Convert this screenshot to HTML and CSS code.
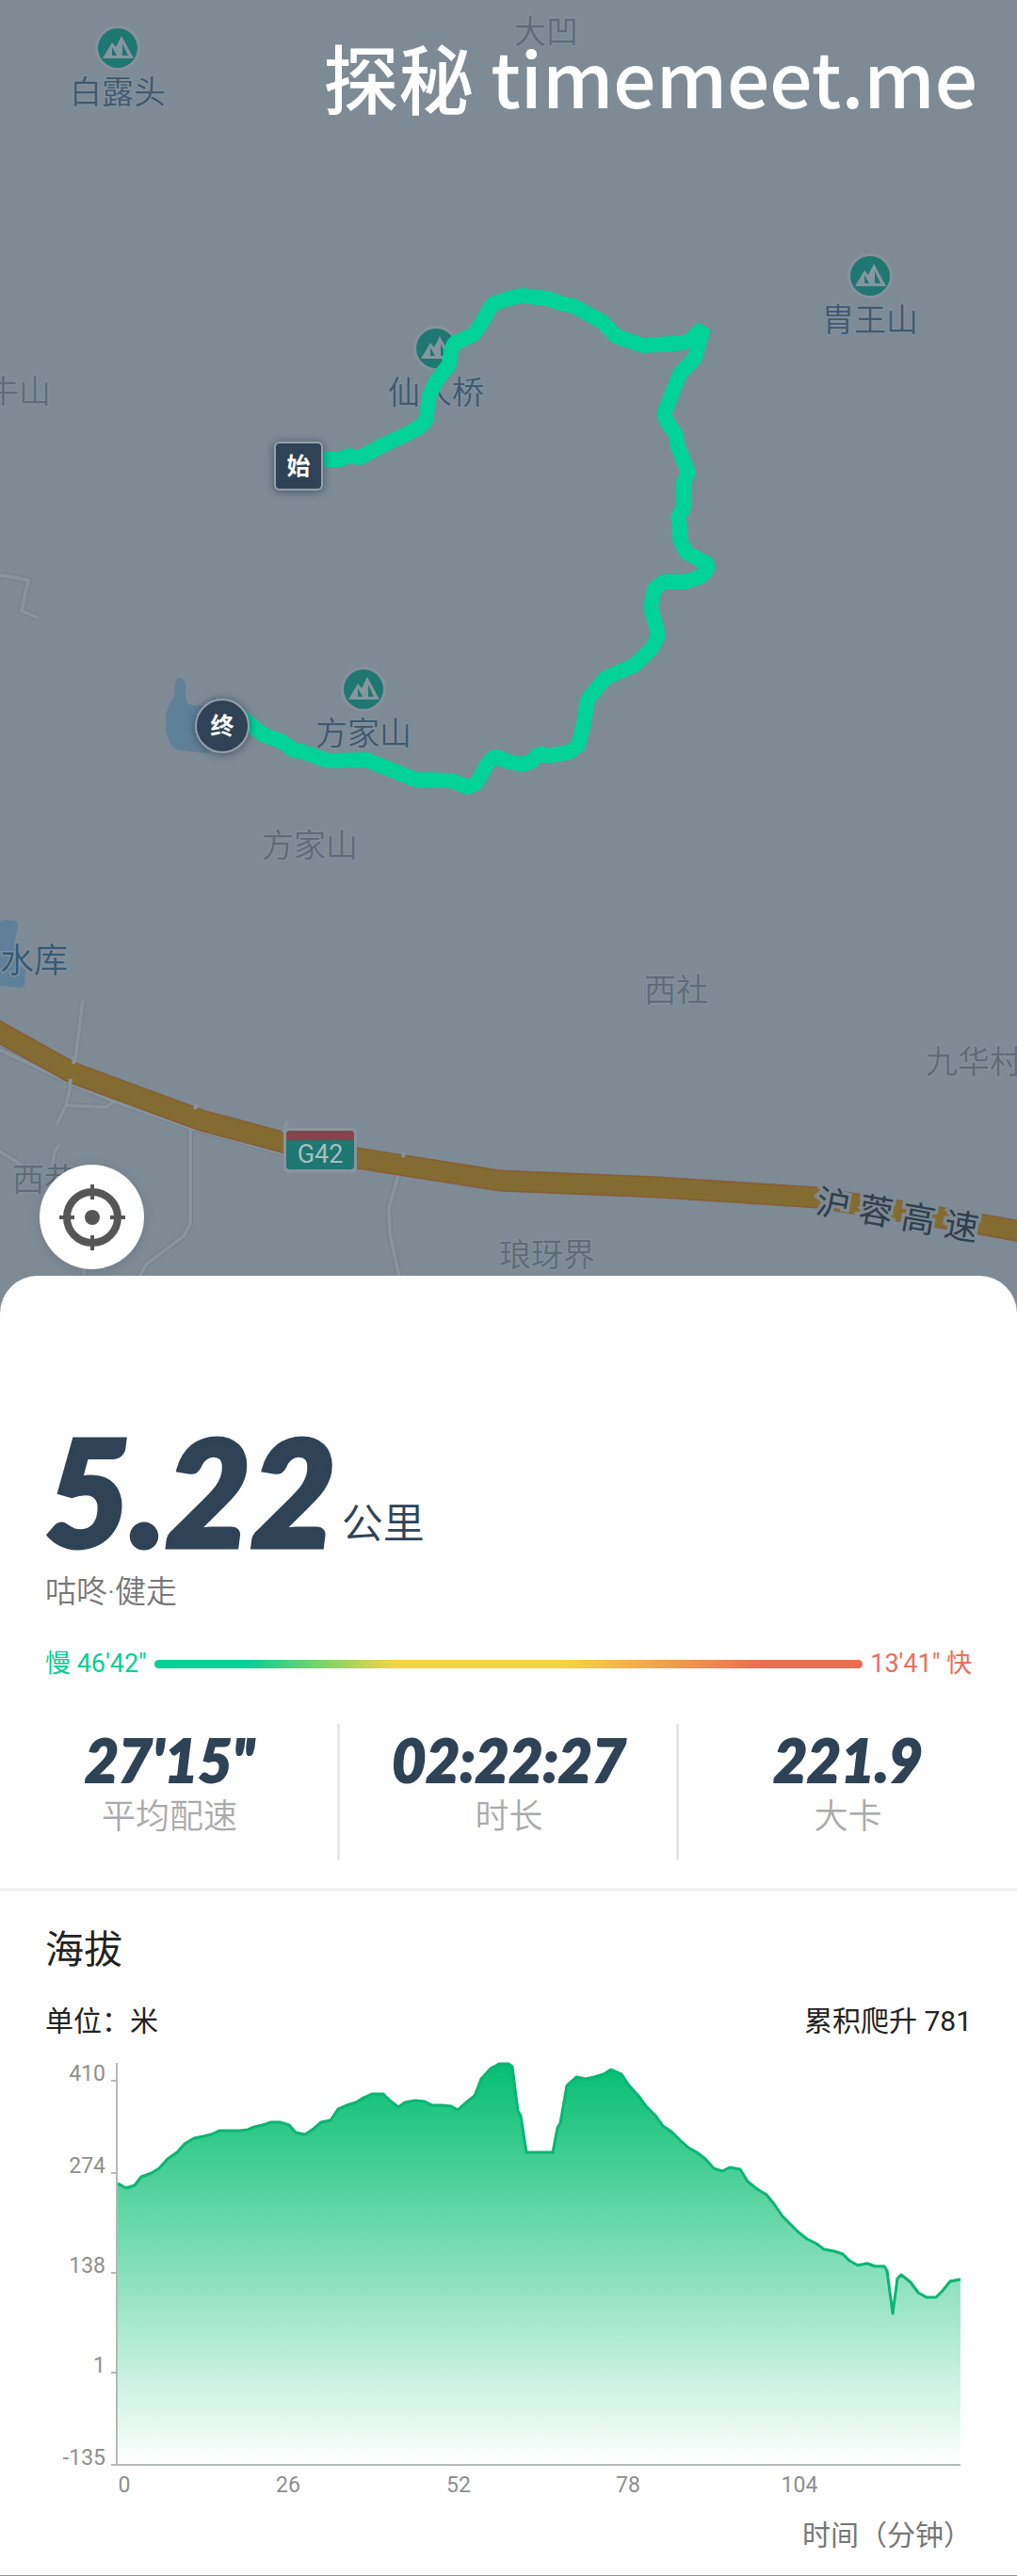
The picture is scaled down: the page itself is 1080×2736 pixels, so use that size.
FILE: index.html
```html
<!DOCTYPE html>
<html lang="zh-CN">
<head>
<meta charset="utf-8">
<meta name="viewport" content="width=device-width, initial-scale=1">
<title>咕咚·健走</title>
<link rel="stylesheet" href="styles.css">
</head>
<body>
<main class="page">
  <section class="map" aria-label="路线地图">
    <svg class="map-canvas" viewBox="0 0 1080 1395" preserveAspectRatio="xMidYMax slice">
      <defs>
        <g id="peak">
          <circle r="24" fill="#87929c"/>
          <circle r="21" fill="#1f7771"/>
          <path fill="#87959e" fill-rule="evenodd" d="M-16 11 L-6 -6 L-2 -1 L4 -13 L17 11 Z M-6 -1 L-6 8 L-1 8 Z M5 -5 L5 8 L11 8 Z"/>
        </g>
      </defs>

      <path class="lake" d="M186 726Q187 720 191 720Q197 722 197 729L197 741Q198 748 204 749L220 749L228 740L236 760L222 800L190 797Q182 795 180 787L176 776L176 762Q178 748 185 740Z"/>
      <path class="lake" d="M0 979Q2 977 5 977L16 978Q19 979 19 984L15 1003L16 1022L27 1030L26 1046Q24 1049 20 1049L0 1047Z"/>

      <g class="lane-edge">
        <path d="M-5 610L30 616L23 649L40 656"/>
        <path d="M-5 1113L74 1150L117 1168L203 1198L300 1225"/>
        <path d="M88 1062L78 1140L70 1174L60 1195"/>
        <path d="M70 1174L113 1176L122 1169"/>
        <path d="M63 1216L58 1223L55 1240"/>
        <path d="M-5 1220L26 1239"/>
        <path d="M202 1199V1300L195 1313L155 1343L140 1372"/>
        <path d="M423 1248L413 1283L414 1310L426 1366"/>
        <path d="M91 1340L87 1366"/>
      </g>
      <g class="lane">
        <path d="M-5 610L30 616L23 649L40 656"/>
        <path d="M-5 1113L74 1150L117 1168L203 1198L300 1225"/>
        <path d="M88 1062L78 1140L70 1174L60 1195"/>
        <path d="M70 1174L113 1176L122 1169"/>
        <path d="M63 1216L58 1223L55 1240"/>
        <path d="M-5 1220L26 1239"/>
        <path d="M202 1199V1300L195 1313L155 1343L140 1372"/>
        <path d="M423 1248L413 1283L414 1310L426 1366"/>
        <path d="M91 1340L87 1366"/>
      </g>

      <path class="highway-edge" d="M-10 1091L76 1139L214 1190L300 1213L379 1230L531 1254L700 1261L868 1272L905 1278L1040 1300L1090 1309"/>
      <path class="highway" d="M-10 1091L76 1139L214 1190L300 1213L379 1230L531 1254L700 1261L868 1272L905 1278L1040 1300L1090 1309"/>
      <path class="lane" d="M79 1122L78 1130M75 1146L74 1152M209 1172L207 1178M305 1191L301 1203M429 1224L428 1229"/>

      <g class="shield">
        <rect x="301" y="1198" width="78" height="48" rx="5" fill="#87949d"/>
        <rect x="304" y="1201" width="72" height="41" rx="4" fill="#1f7771"/>
        <path d="M304 1211V1205Q304 1201 308 1201H372Q376 1201 376 1205V1211Z" fill="#87424b"/>
        <text x="340" y="1235">G42</text>
      </g>

      <g class="place">
        <text x="580" y="46">大凹</text>
        <text x="20" y="428">牛山</text>
        <text x="329" y="910">方家山</text>
        <text x="718" y="1064">西社</text>
        <text x="1034" y="1140">九华村</text>
        <text x="581" y="1345">琅玡界</text>
        <text x="47" y="1265">西巷</text>
      </g>
      <text class="water-name" x="0" y="1033">水库</text>
      <text class="road-name" transform="translate(865 1288) rotate(10)" x="0 46 92 138">沪蓉高速</text>

      <g class="summit">
        <use href="#peak" x="125" y="51"/><text x="125" y="110">白露头</text>
        <use href="#peak" x="463" y="370"/><text x="463" y="429">仙人桥</text>
        <use href="#peak" x="924" y="293"/><text x="924" y="352">胄王山</text>
        <use href="#peak" x="386" y="732"/><text x="386" y="791">方家山</text>
      </g>

      <path class="route" d="M318 488L361 488L370 484L382 486L406 473L432 461L446 453L452 447L456 420L463 405L477 387L479 373L482 365L503 355L510 345L523 323L540 317L554 314L581 317L595 322L609 325L640 342L654 357L683 367L726 364L733 361L747 348L738 380L722 397L712 422L705 440L709 449L718 462L719 472L731 502L726 512L726 540L720 548L722 560L722 573L729 587L752 599L751 605L743 613L728 618L705 618L695 625L691 645L698 670L698 678L691 690L673 707L643 720L624 743L620 768L614 792L604 799L581 803L573 800L564 809L554 812L540 809L525 803L517 812L506 832L496 836L479 829L441 828L389 807L348 808L320 798L312 797L300 788L279 780L258 763L236 771"/>

      <g class="marker">
        <rect x="292" y="470" width="50" height="50" rx="5"/>
        <text x="317" y="504">始</text>
        <circle cx="236" cy="771" r="28"/>
        <text x="236" y="780">终</text>
      </g>
    </svg>
    <p class="watermark">探秘 timemeet.me</p>
    <button class="locate" type="button" aria-label="定位">
      <svg viewBox="-36 -36 72 72" width="72" height="72" fill="none" stroke="#565656">
        <circle r="27" stroke-width="8"/>
        <path d="M-35 0H-19M35 0H19M0 -35V-19M0 35V19" stroke-width="4"/>
        <circle r="8" fill="#565656" stroke="none"/>
      </svg>
    </button>
  </section>

  <section class="sheet">
    <div class="summary">
      <p class="distance"><strong class="distance-value">5.22</strong><span class="distance-unit">公里</span></p>
      <p class="brand">咕咚·健走</p>
      <div class="pace">
        <span class="pace-slow">慢 46'42"</span>
        <span class="pace-bar"></span>
        <span class="pace-fast">13'41" 快</span>
      </div>
    </div>

    <dl class="stats">
      <div class="stat"><dd>27'15"</dd><dt>平均配速</dt></div>
      <div class="stat"><dd>02:22:27</dd><dt>时长</dt></div>
      <div class="stat"><dd>221.9</dd><dt>大卡</dt></div>
    </dl>

    <section class="altitude">
      <h2>海拔</h2>
      <div class="altitude-info"><span>单位：米</span><span>累积爬升 781</span></div>
      <svg class="chart" viewBox="0 2180 1080 480" role="img" aria-label="海拔曲线">
        <defs>
          <linearGradient id="rise" gradientUnits="userSpaceOnUse" x1="0" y1="2191" x2="0" y2="2618">
            <stop offset="0" stop-color="#05be72"/>
            <stop offset="1" stop-color="#ffffff"/>
          </linearGradient>
        </defs>
        <path fill="url(#rise)" d="M125 2319L134 2324L143 2321L150 2312L161 2308L169 2303L178 2293L188 2286L196 2277L206 2271L216 2269L224 2267L233 2263L254 2263L263 2262L270 2259L279 2257L288 2254L297 2254L307 2257L314 2265L324 2267L333 2261L341 2254L351 2252L359 2240L368 2236L378 2233L386 2228L395 2224L407 2224L414 2231L423 2238L430 2233L441 2231L451 2232L459 2236L469 2236L479 2237L486 2241L495 2233L504 2226L511 2208L521 2197L530 2192L540 2192L544 2195L550 2242L553 2247L559 2286L587 2286L592 2260L595 2255L602 2215L612 2206L622 2208L631 2206L641 2203L649 2198L660 2203L668 2215L678 2226L686 2237L696 2247L704 2258L713 2264L722 2273L731 2281L740 2286L749 2293L758 2303L767 2306L775 2302L786 2304L794 2317L804 2325L814 2331L822 2341L831 2354L840 2363L848 2371L857 2378L867 2383L875 2389L886 2391L895 2394L902 2401L911 2406L921 2404L929 2407L939 2407L942 2412L948 2457L953 2420L957 2416L967 2424L975 2435L984 2440L994 2440L1001 2433L1009 2423L1020 2421V2617H125Z"/>
        <path class="curve" d="M125 2319L134 2324L143 2321L150 2312L161 2308L169 2303L178 2293L188 2286L196 2277L206 2271L216 2269L224 2267L233 2263L254 2263L263 2262L270 2259L279 2257L288 2254L297 2254L307 2257L314 2265L324 2267L333 2261L341 2254L351 2252L359 2240L368 2236L378 2233L386 2228L395 2224L407 2224L414 2231L423 2238L430 2233L441 2231L451 2232L459 2236L469 2236L479 2237L486 2241L495 2233L504 2226L511 2208L521 2197L530 2192L540 2192L544 2195L550 2242L553 2247L559 2286L587 2286L592 2260L595 2255L602 2215L612 2206L622 2208L631 2206L641 2203L649 2198L660 2203L668 2215L678 2226L686 2237L696 2247L704 2258L713 2264L722 2273L731 2281L740 2286L749 2293L758 2303L767 2306L775 2302L786 2304L794 2317L804 2325L814 2331L822 2341L831 2354L840 2363L848 2371L857 2378L867 2383L875 2389L886 2391L895 2394L902 2401L911 2406L921 2404L929 2407L939 2407L942 2412L948 2457L953 2420L957 2416L967 2424L975 2435L984 2440L994 2440L1001 2433L1009 2423L1020 2421"/>
        <g class="axis">
          <path d="M124 2191V2618M118 2210H124M118 2308H124M118 2414H124M118 2520H124M118 2618H1020"/>
        </g>
        <g class="tick-y">
          <text x="112" y="2210">410</text>
          <text x="112" y="2308">274</text>
          <text x="112" y="2414">138</text>
          <text x="112" y="2520">1</text>
          <text x="112" y="2618">-135</text>
        </g>
        <g class="tick-x">
          <text x="132" y="2647">0</text>
          <text x="306" y="2647">26</text>
          <text x="487" y="2647">52</text>
          <text x="667" y="2647">78</text>
          <text x="849" y="2647">104</text>
        </g>
      </svg>
      <p class="axis-title">时间（分钟）</p>
    </section>
  </section>
</main>
</body>
</html>
```
FILE: styles.css
```css
* {
  box-sizing: border-box;
  margin: 0;
  padding: 0;
}

body {
  background: #7e8a94;
  color: #222;
  font-family: Roboto, "Noto Sans CJK SC", sans-serif;
}

.page {
  display: flex;
  flex-direction: column;
}

/* Map */
.map {
  position: relative;
  overflow: hidden;
}

.map-canvas {
  display: block;
  width: 100%;
  height: auto;
}

.map text {
  font-family: "Noto Sans CJK SC", sans-serif;
  font-weight: 350;
  text-anchor: middle;
  paint-order: stroke;
  stroke: #83909a;
  stroke-width: 3px;
}

.lake { fill: #5f8099; }

.lane, .lane-edge, .highway, .highway-edge, .route {
  fill: none;
}

.lane { stroke: #87939d; stroke-width: 4px; stroke-linejoin: round; }
.lane-edge { stroke: #74818b; stroke-width: 6px; stroke-linejoin: round; }
.highway { stroke: #846b31; stroke-width: 20px; }
.highway-edge { stroke: #865d37; stroke-width: 23px; }
.route { stroke: #00d298; stroke-width: 16px; stroke-linejoin: bevel; }

.place { fill: #5f6c77; font-size: 34px; }
.summit { font-size: 34px; }
.summit text { fill: #3f5a70; }

.map .water-name {
  fill: #355a78;
  font-size: 36px;
  text-anchor: start;
}

.map .road-name {
  fill: #2f3f4c;
  stroke: #7e8a94;
  stroke-width: 7px;
  font-size: 36px;
  font-weight: 400;
  text-anchor: start;
}

.map .shield text {
  fill: #a3bfc2;
  stroke: none;
  font-family: Roboto, sans-serif;
  font-size: 27px;
  font-weight: 400;
}

.marker rect, .marker circle {
  fill: #2f4256;
  stroke: #96a1ab;
  stroke-width: 2px;
  filter: drop-shadow(0 1px 5px rgba(30, 48, 70, 0.6));
}

.map .marker text {
  fill: #fff;
  stroke: none;
  font-size: 25px;
  font-weight: 700;
}

.watermark {
  position: absolute;
  top: 20px;
  right: 42px;
  color: #fff;
  font: 500 80px/120px "Noto Sans CJK SC", sans-serif;
  white-space: nowrap;
}

.locate {
  position: absolute;
  left: 42px;
  bottom: 47px;
  display: grid;
  place-items: center;
  width: 111px;
  height: 111px;
  border: 0;
  border-radius: 50%;
  background: #fff;
  box-shadow: 0 2px 12px rgba(40, 50, 60, 0.15);
}

/* Sheet */
.sheet {
  position: relative;
  margin-top: -40px;
  padding-top: 150px;
  border-bottom: 1px solid #8f8f8f;
  border-radius: 40px 40px 0 0;
  background: #fff;
}

.summary {
  padding: 0 48px;
}

.distance {
  display: flex;
  align-items: flex-end;
  gap: 6px;
  color: #2f4256;
}

.distance-value {
  font: italic 900 156px/156px Lato, sans-serif;
  -webkit-text-stroke: 5px #2f4256;
}

.distance-unit {
  padding-bottom: 10px;
  font-size: 44px;
  font-weight: 350;
  line-height: 64px;
}

.brand {
  margin-top: 10px;
  color: #777;
  font-size: 33px;
  font-weight: 350;
  line-height: 40px;
}

.pace {
  display: flex;
  align-items: center;
  gap: 8px;
  margin-top: 38px;
  font-size: 27px;
  line-height: 36px;
}

.pace-slow { color: #00cf96; }
.pace-fast { color: #e8705a; }

.pace-bar {
  flex: 1;
  height: 9px;
  border-radius: 5px;
  background: linear-gradient(90deg, #03d196 13%, #f3d53f 34%, #f3d53f 58%, #ed6c55 86%);
}

.stats {
  display: grid;
  grid-template-columns: repeat(3, 1fr);
  margin: 46px 0 30px;
}

.stat {
  padding: 7px 0 21px;
  text-align: center;
}

.stat + .stat {
  margin-left: -2px;
  border-left: 3px solid #e6e6e6;
}

.stat dd {
  color: #2f4256;
  font: italic 900 62px/62px Lato, sans-serif;
  -webkit-text-stroke: 2px #2f4256;
}

.stat dt {
  margin-top: 6px;
  color: #aaa;
  font-size: 36px;
  font-weight: 350;
  line-height: 48px;
}

/* Altitude */
.altitude {
  padding: 34px 0 22px;
  border-top: 4px solid #f2f2f2;
}

.altitude h2 {
  padding: 0 48px;
  font-size: 41px;
  font-weight: 400;
  line-height: 56px;
}

.altitude-info {
  display: flex;
  justify-content: space-between;
  margin-top: 28px;
  padding: 0 48px;
  font-size: 30px;
  line-height: 40px;
}

.chart {
  display: block;
  width: 100%;
  height: auto;
  margin: 13px 0;
}

.curve { fill: none; stroke: #0ab573; stroke-width: 3px; stroke-linejoin: round; }
.axis { fill: none; stroke: #b4b8b6; stroke-width: 2px; }
.chart text { fill: #8e8e8e; font-size: 23px; }
.tick-y { text-anchor: end; }
.tick-x { text-anchor: middle; }

.axis-title {
  padding: 0 48px;
  color: #777;
  font-size: 30px;
  line-height: 40px;
  text-align: right;
}
```
